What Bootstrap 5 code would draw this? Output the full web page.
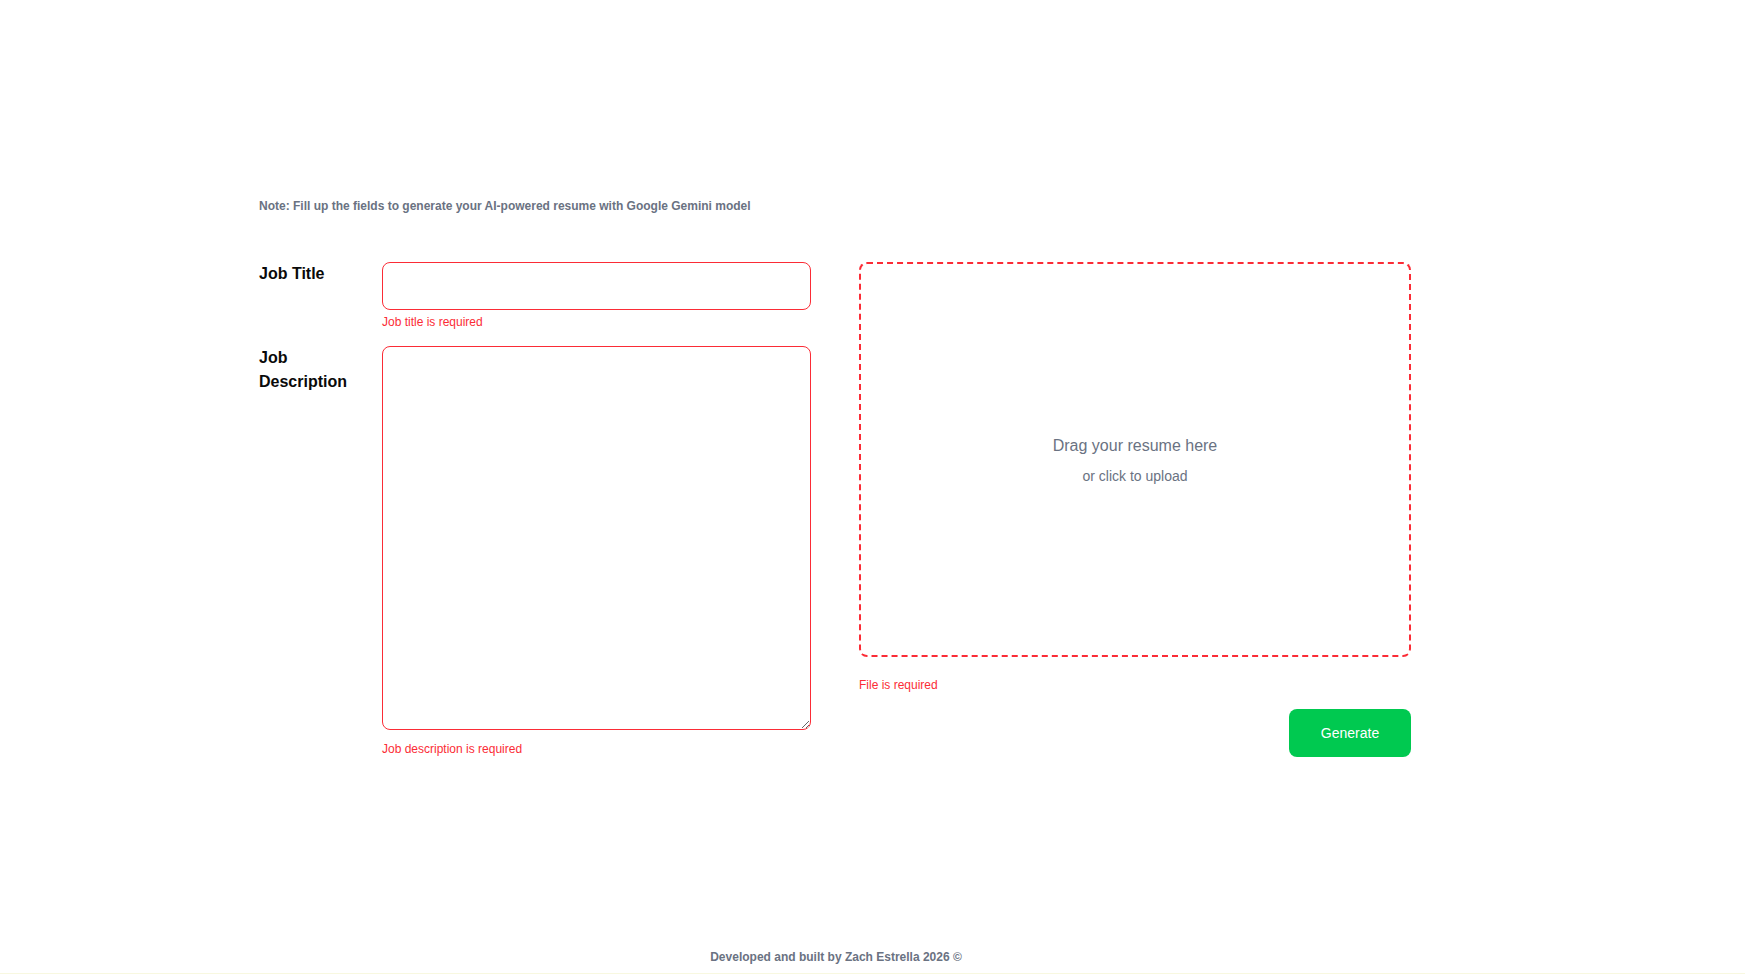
<!DOCTYPE html>
<html lang="en">
<head>
<meta charset="utf-8">
<title>Resume generator</title>
<link href="https://cdn.jsdelivr.net/npm/bootstrap@5.3.0/dist/css/bootstrap.min.css" rel="stylesheet">
<style>
html, body { height: 100%; }
body { font-family: "Liberation Sans", Arial, sans-serif; background: #fff; color: #0a0a0a; overflow: hidden; }
.page { height: 974px; border-bottom: 1px solid #f8f8e0; box-sizing: border-box; }
.inner { width: 1672px; }
.wrap { width: 1152px; padding-top: 196px; margin-left: 259px; }
.note { font-size: 12px; line-height: 20px; font-weight: 700; color: #6a7282; margin-bottom: 46px; }
.cols { gap: 48px; }
.col-half { width: 552px; flex: none; }
.lbl { width: 123px; flex: none; font-size: 16px; font-weight: 700; line-height: 24px; margin: 0; padding-right: 16px; }
.fld { width: 429px; flex: none; }
.inp { display: block; width: 100%; border: 1px solid #fb2c36; border-radius: 8px; background: #fff; outline: 0; padding: 8px 12px; }
.inp.one { height: 48px; }
.inp.many { height: 384px; resize: vertical; }
.err { color: #fb2c36; font-size: 12px; line-height: 16px; margin-top: 4px; }
.err.desc { margin-top: 11px; }
.row1 { margin-bottom: 16px; }
.drop { height: 395px; border: 2px dashed #fb2c36; border-radius: 8px; color: #6a7282; }
.drop .big { font-size: 16px; line-height: 24px; }
.drop .small { font-size: 14px; line-height: 20px; margin-top: 8px; }
.err.file { margin-top: 20px; }
.gen { width: 122px; height: 48px; background: #00c950; color: #fff; border: 0; border-radius: 8px; font-size: 14px; margin-top: 16px; }
.gen:hover { background: #00c950; color: #fff; }
footer { font-size: 12px; font-weight: 700; line-height: 16px; color: #6a7282; text-align: center; padding-top: 192px; }
</style>
</head>
<body>
<div class="page">
  <div class="inner">
    <div class="wrap">
      <p class="note">Note: Fill up the fields to generate your AI-powered resume with Google Gemini model</p>
      <form class="d-flex cols" novalidate onsubmit="return false">
        <div class="col-half">
          <div class="d-flex row1">
            <label class="lbl" for="t">Job Title</label>
            <div class="fld">
              <input class="inp one" id="t" type="text">
              <div class="err">Job title is required</div>
            </div>
          </div>
          <div class="d-flex">
            <label class="lbl" for="d">Job Description</label>
            <div class="fld">
              <textarea class="inp many" id="d"></textarea>
              <div class="err desc">Job description is required</div>
            </div>
          </div>
        </div>
        <div class="col-half">
          <div class="drop d-flex flex-column align-items-center justify-content-center">
            <div class="big">Drag your resume here</div>
            <div class="small">or click to upload</div>
          </div>
          <div class="err file">File is required</div>
          <div class="d-flex justify-content-end">
            <button class="btn gen" type="button">Generate</button>
          </div>
        </div>
      </form>
    </div>
    <footer>Developed and built by Zach Estrella 2026 ©</footer>
  </div>
</div>
<script src="https://cdn.jsdelivr.net/npm/bootstrap@5.3.0/dist/js/bootstrap.bundle.min.js"></script>
</body>
</html>
